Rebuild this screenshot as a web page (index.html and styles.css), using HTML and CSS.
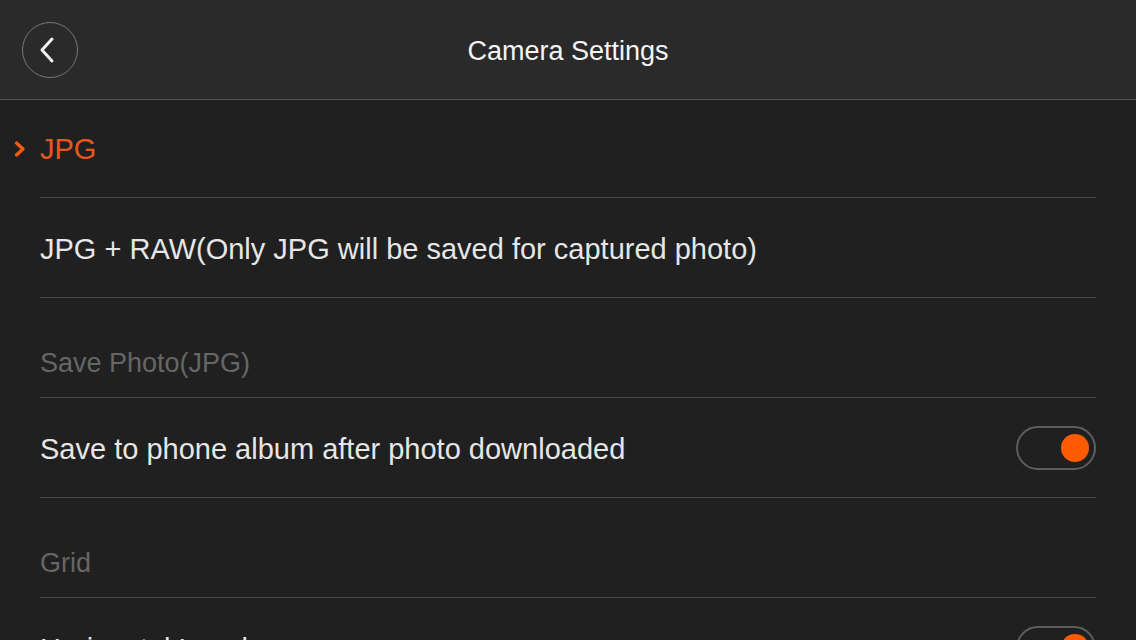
FILE: index.html
```html
<!DOCTYPE html>
<html>
<head>
<meta charset="utf-8">
<link rel="stylesheet" href="styles.css">
</head>
<body>
<div class="app">
  <header class="topbar">
    <button class="back" aria-label="Back">
      <svg width="20" height="28" viewBox="0 0 20 28"><path d="M14 3 L4 14 L14 25" fill="none" stroke="#f2f2f2" stroke-width="3" stroke-linecap="round" stroke-linejoin="round"/></svg>
    </button>
    <h1 class="title">Camera Settings</h1>
  </header>
  <main class="list">
    <div class="row selected">
      <span class="check"><svg width="12" height="16" viewBox="0 0 12 16"><path d="M2.5 2 L9 8 L2.5 14" fill="none" stroke="#ff5a14" stroke-width="3.2" stroke-linecap="round" stroke-linejoin="round"/></svg></span>
      <span class="label">JPG</span>
    </div>
    <div class="row"><span class="label">JPG + RAW(Only JPG will be saved for captured photo)</span></div>
    <div class="row section"><span class="label">Save Photo(JPG)</span></div>
    <div class="row">
      <span class="label">Save to phone album after photo downloaded</span>
      <span class="toggle on"><span class="knob"></span></span>
    </div>
    <div class="row section"><span class="label">Grid</span></div>
    <div class="row">
      <span class="label">Horizontal Level</span>
      <span class="toggle on"><span class="knob"></span></span>
    </div>
  </main>
</div>
</body>
</html>
```
FILE: styles.css
```css
html, body {
  margin: 0;
  padding: 0;
  background: #202020;
  overflow: hidden;
}
.app {
  width: 1136px;
  height: 640px;
  font-family: "Liberation Sans", Arial, sans-serif;
  color: #e8e8e8;
  overflow: hidden;
}
.topbar {
  height: 99px;
  background: #2a2a2a;
  border-bottom: 1px solid #555;
  display: flex;
  align-items: center;
  justify-content: center;
  position: relative;
}
.back {
  position: absolute;
  left: 22px;
  top: 22px;
  width: 56px;
  height: 56px;
  border-radius: 50%;
  border: 1px solid #777;
  background: transparent;
  padding: 0;
  display: flex;
  align-items: center;
  justify-content: center;
}
.back svg { margin-left: -4px; }
.title {
  margin: 4px 0 0 0;
  font-weight: normal;
  font-size: 27px;
  color: #f4f4f4;
}
.list {
  display: flex;
  flex-direction: column;
}
.row {
  height: 100px;
  box-sizing: border-box;
  flex-shrink: 0;
  margin-left: 40px;
  margin-right: 40px;
  border-bottom: 1px solid #464646;
  display: flex;
  align-items: center;
  justify-content: space-between;
  position: relative;
  font-size: 29px;
  padding-top: 3px;
}
.row:first-child { height: 98px; padding-top: 2px; }
.row .label { color: #e6e6e6; }
.row.selected .label { color: #e8581e; }
.check {
  position: absolute;
  left: -26px;
  top: 50%;
  margin-top: -8px;
  width: 12px;
  height: 16px;
  display: flex;
}
.row.section {
  align-items: flex-end;
  padding-bottom: 18px;
}
.row.section .label { color: #666; font-size: 27px; }
.toggle {
  width: 66px;
  height: 40px;
  border: 2px solid #5e5e5e;
  border-radius: 22px;
  display: flex;
  align-items: center;
  justify-content: flex-end;
  padding: 0 5px;
  box-sizing: content-box;
  margin-top: -3px;
}
.knob {
  width: 28px;
  height: 28px;
  border-radius: 50%;
  background: #ff5a00;
}
```
